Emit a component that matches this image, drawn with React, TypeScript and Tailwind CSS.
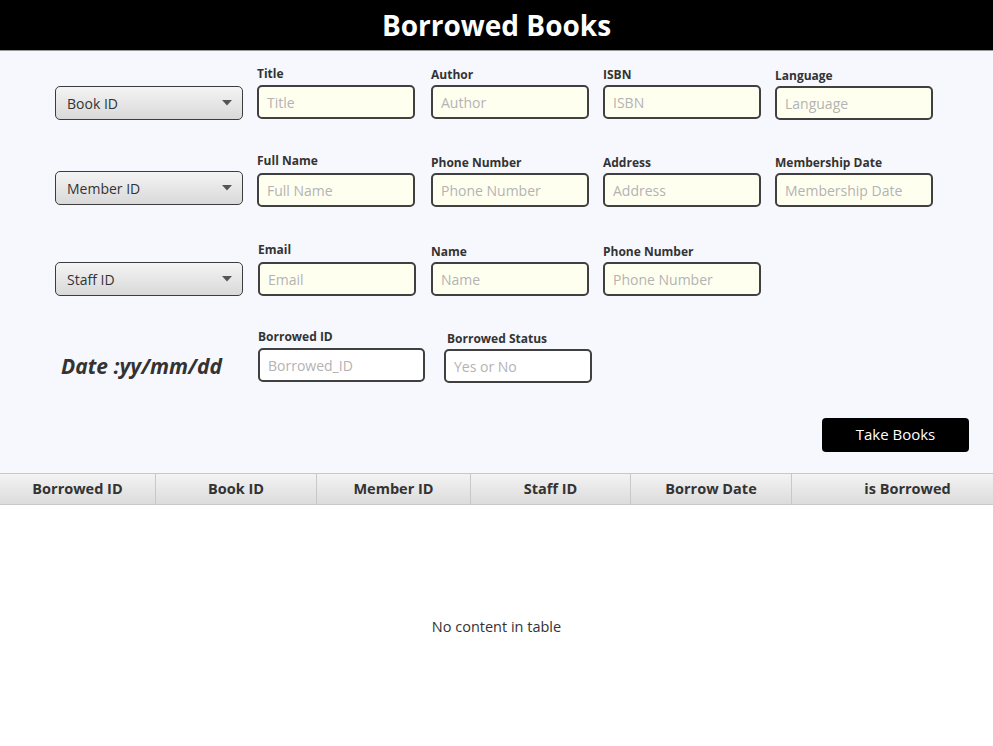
import React from "react";

const font = { fontFamily: '"Open Sans", "Noto Sans", sans-serif' };

function Combo({ label, className = "" }: { label: string; className?: string }) {
  return (
    <div
      className={`w-[188px] h-[34px] shrink-0 rounded-[5px] border-[1.5px] border-[#3c3c3c] bg-gradient-to-b from-[#f4f4f4] to-[#d9d9d9] flex items-center justify-between pl-[11px] pr-[10px] text-[14px] text-[#333] ${className}`}
    >
      <span>{label}</span>
      <svg width="10" height="6" viewBox="0 0 10 6">
        <path d="M0 0 L10 0 L5 5.5 Z" fill="#555" />
      </svg>
    </div>
  );
}

function Field({
  label,
  placeholder,
  w = "w-[158px]",
  bg = "bg-[#fffff0]",
  className = "",
  labelClass = "",
}: {
  label: string;
  placeholder: string;
  w?: string;
  bg?: string;
  className?: string;
  labelClass?: string;
}) {
  return (
    <div className={`flex flex-col shrink-0 ${w} ${className}`}>
      <div className={`text-[12px] font-bold leading-[18px] text-[#333] mb-[1px] ${labelClass}`}>{label}</div>
      <div
        className={`h-[34px] rounded-[5px] border-2 border-[#404040] ${bg} flex items-center pl-[8px] text-[14px] text-[#b3b3b3]`}
      >
        {placeholder}
      </div>
    </div>
  );
}

export default function App() {
  const cols = [
    { t: "Borrowed ID", w: "w-[156px]", c: "" },
    { t: "Book ID", w: "w-[161px]", c: "" },
    { t: "Member ID", w: "w-[154px]", c: "" },
    { t: "Staff ID", w: "w-[160px]", c: "" },
    { t: "Borrow Date", w: "w-[161px]", c: "" },
    { t: "is Borrowed", w: "flex-1", c: "pl-[30px]" },
  ];
  return (
    <div className="w-[993px] h-[746px] flex flex-col bg-white overflow-hidden" style={font}>
      <div className="h-[51px] shrink-0 bg-black border-b border-[#9a9a9a] flex items-center justify-center">
        <span className="text-white font-bold text-[28px] leading-none">Borrowed Books</span>
      </div>
      <div className="bg-[#f7f8fd] flex flex-col pl-[55px] shrink-0">
        {/* Row 1 */}
        <div className="h-[69px] flex items-end">
          <Combo label="Book ID" className="mr-[14px]" />
          <Field label="Title" placeholder="Title" className="mr-[16px] mb-[1px]" labelClass="-translate-y-[1px]" />
          <Field label="Author" placeholder="Author" className="mr-[14px] mb-[1px]" />
          <Field label="ISBN" placeholder="ISBN" className="mr-[14px] mb-[1px]" />
          <Field label="Language" placeholder="Language" />
        </div>
        {/* Row 2 */}
        <div className="h-[87px] flex items-end">
          <Combo label="Member ID" className="mr-[14px] mb-[2px]" />
          <Field label="Full Name" placeholder="Full Name" className="mr-[16px]" labelClass="-translate-y-[2px]" />
          <Field label="Phone Number" placeholder="Phone Number" className="mr-[14px]" />
          <Field label="Address" placeholder="Address" className="mr-[14px]" />
          <Field label="Membership Date" placeholder="Membership Date" />
        </div>
        {/* Row 3 */}
        <div className="h-[89px] flex items-end">
          <Combo label="Staff ID" className="mr-[15px]" />
          <Field label="Email" placeholder="Email" className="mr-[15px]" labelClass="-translate-y-[2px]" />
          <Field label="Name" placeholder="Name" className="mr-[14px]" />
          <Field label="Phone Number" placeholder="Phone Number" />
        </div>
        {/* Row 4 */}
        <div className="h-[87px] flex items-end">
          <div className="w-[203px] shrink-0 h-[34px] flex items-center pl-[6px]">
            <span className="text-[21px] font-bold italic text-[#333] leading-none">Date :yy/mm/dd</span>
          </div>
          <Field
            label="Borrowed ID"
            placeholder="Borrowed_ID"
            w="w-[167px]"
            bg="bg-white"
            className="mr-[19px] mb-[1px]"
            labelClass="-translate-y-[1px]"
          />
          <Field label="Borrowed Status" placeholder="Yes or No" w="w-[148px]" bg="bg-white" labelClass="pl-[3px]" />
        </div>
        <div className="h-[90px] flex justify-end items-start pr-[24px] pt-[35px]">
          <div className="w-[147px] h-[34px] bg-black rounded-[4px] flex items-center justify-center text-white text-[15px]">
            <span className="-translate-y-[1px]">Take Books</span>
          </div>
        </div>
      </div>
      <div className="h-[32px] shrink-0 flex border-t border-b border-[#c8c8c8] bg-gradient-to-b from-[#f3f3f3] to-[#dcdcdc]">
        {cols.map((c, i) => (
          <div
            key={i}
            className={`${c.w} ${c.c} h-full flex items-center justify-center text-[14.5px] font-bold text-[#333] ${
              i < cols.length - 1 ? "border-r border-[#c8c8c8]" : ""
            }`}
          >
            {c.t}
          </div>
        ))}
      </div>
      <div className="flex-1 bg-white flex items-center justify-center">
        <span className="text-[14.5px] text-[#333] translate-y-[1px]">No content in table</span>
      </div>
    </div>
  );
}
